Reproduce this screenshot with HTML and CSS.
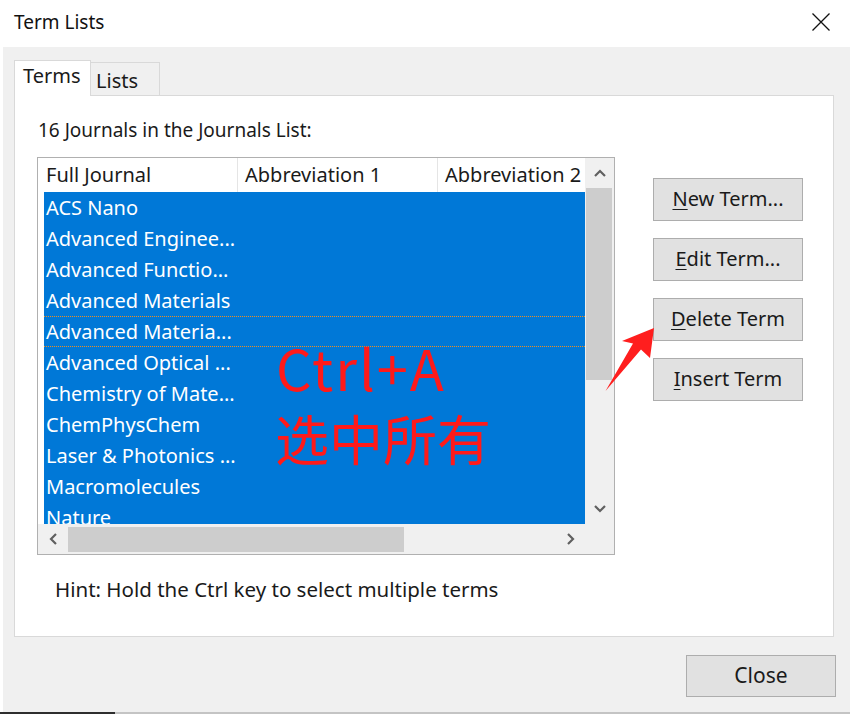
FILE: index.html
```html
<!DOCTYPE html>
<html>
<head>
<meta charset="utf-8">
<title>Term Lists</title>
<link rel="stylesheet" href="styles.css">
</head>
<body>
<div class="window">
  <div class="titlebar">
    <span class="title">Term Lists</span>
    <svg class="close-x" width="18" height="18" viewBox="0 0 18 18"><path d="M0.5 0.5 L17.5 17.5 M17.5 0.5 L0.5 17.5" stroke="#111" stroke-width="1.3" fill="none"/></svg>
  </div>
  <div class="client">
    <div class="tabs">
      <div class="tab active">Terms</div>
      <div class="tab">Lists</div>
    </div>
    <div class="panel">
      <div class="label">16 Journals in the Journals List:</div>
      <div class="main">
        <div class="listbox">
          <div class="lv">
            <div class="lv-content">
              <div class="lv-header">
                <div class="hcell c1">Full Journal</div>
                <div class="hcell c2">Abbreviation 1</div>
                <div class="hcell c3">Abbreviation 2</div>
              </div>
              <div class="rows">
                <div class="row">ACS Nano</div>
                <div class="row">Advanced Enginee...</div>
                <div class="row">Advanced Functio...</div>
                <div class="row">Advanced Materials</div>
                <div class="row focus">Advanced Materia...</div>
                <div class="row">Advanced Optical ...</div>
                <div class="row">Chemistry of Mate...</div>
                <div class="row">ChemPhysChem</div>
                <div class="row">Laser &amp; Photonics ...</div>
                <div class="row">Macromolecules</div>
                <div class="row">Nature</div>
              </div>
            </div>
            <div class="vscroll">
              <div class="sb-btn vbtn"><svg width="12" height="8" viewBox="0 0 12 8"><polyline points="1,7 6,2 11,7" fill="none" stroke="#606060" stroke-width="2.2"/></svg></div>
              <div class="vthumb"></div>
              <div class="track"></div>
              <div class="sb-btn vbtn"><svg width="12" height="8" viewBox="0 0 12 8"><polyline points="1,1 6,6 11,1" fill="none" stroke="#606060" stroke-width="2.2"/></svg></div>
            </div>
          </div>
          <div class="hscroll">
            <div class="sb-btn hbtn"><svg width="8" height="12" viewBox="0 0 8 12"><polyline points="7,1 2,6 7,11" fill="none" stroke="#606060" stroke-width="2.2"/></svg></div>
            <div class="hthumb"></div>
            <div class="track"></div>
            <div class="sb-btn hbtn"><svg width="8" height="12" viewBox="0 0 8 12"><polyline points="1,1 6,6 1,11" fill="none" stroke="#606060" stroke-width="2.2"/></svg></div>
            <div class="corner"></div>
          </div>
        </div>
        <div class="buttons">
          <div class="btn"><span class="ul">N</span>ew Term...</div>
          <div class="btn"><span class="ul">E</span>dit Term...</div>
          <div class="btn"><span class="ul">D</span>elete Term</div>
          <div class="btn"><span class="ul">I</span>nsert Term</div>
        </div>
      </div>
      <div class="hint">Hint: Hold the Ctrl key to select multiple terms</div>
    </div>
    <div class="footer">
      <div class="btn close-btn">Close</div>
    </div>
  </div>
  <div class="bottom-line"></div>

  <div class="annotation">
    <div class="ann-line1">Ctrl+A</div>
    <div class="ann-line2">选中所有</div>
  </div>
  <svg class="arrow" width="60" height="70" viewBox="600 325 60 70">
    <polygon points="654,328 622,341 633,343.5 605.5,391 641,349.5 650,358" fill="#ff1e1e"/>
  </svg>
</div>
</body>
</html>
```

FILE: styles.css
```css
html, body {
  margin: 0;
  padding: 0;
  background: #ffffff;
}

.window {
  position: relative;
  width: 850px;
  height: 714px;
  overflow: hidden;
  font-family: "Noto Sans", "Open Sans", sans-serif;
  color: #1a1a1a;
}

.titlebar {
  height: 47px;
  display: flex;
  align-items: center;
  justify-content: space-between;
  padding: 0 20px 4px 14px;
  box-sizing: border-box;
  background: #ffffff;
}

.title {
  font-size: 19px;
  color: #111;
}

.client {
  margin-left: 3px;
  height: 665px;
  background: #f0f0f0;
  padding: 13px 15px 0 11px;
  box-sizing: border-box;
}

.tabs {
  display: flex;
  height: 36px;
  margin-bottom: -1px;
  position: relative;
  z-index: 1;
}

.tab {
  box-sizing: border-box;
  border: 1px solid #d9d9d9;
  border-bottom: none;
  font-size: 20px;
  line-height: 30px;
}

.tab.active {
  width: 77px;
  height: 36px;
  background: #ffffff;
  padding-left: 8px;
}

.tab:not(.active) {
  width: 69px;
  height: 33px;
  margin-top: 2px;
  background: #f0f0f0;
  border-left: none;
  padding-left: 5px;
  line-height: 35px;
}

.panel {
  width: 820px;
  height: 542px;
  box-sizing: border-box;
  border: 1px solid #d9d9d9;
  background: #ffffff;
  padding: 22px 0 0 22px;
}

.label {
  font-size: 19px;
  line-height: 24px;
  padding-left: 1px;
}

.main {
  display: flex;
  margin-top: 15px;
}

.listbox {
  width: 578px;
  height: 398px;
  box-sizing: border-box;
  border: 1px solid #b0b0b0;
  display: flex;
  flex-direction: column;
  background: #ffffff;
}

.lv {
  display: flex;
  height: 366px;
}

.lv-content {
  width: 547px;
  overflow: hidden;
}

.lv-header {
  display: flex;
  height: 34px;
  white-space: nowrap;
}

.hcell {
  flex: none;
  box-sizing: border-box;
  font-size: 20px;
  line-height: 34px;
  overflow: hidden;
}

.c1 {
  width: 200px;
  padding-left: 8px;
  border-right: 1px solid #e5e5e5;
}

.c2 {
  width: 200px;
  padding-left: 7px;
  border-right: 1px solid #e5e5e5;
}

.c3 {
  width: 147px;
  padding-left: 7px;
}

.rows {
  margin-left: 6px;
  height: 332px;
  overflow: hidden;
  background: #0078d7;
}

.row {
  height: 31px;
  box-sizing: border-box;
  padding-left: 2px;
  font-size: 20px;
  line-height: 31px;
  color: #ffffff;
  white-space: nowrap;
}

.row.focus {
  border-top: 1px dotted #f0901e;
  border-bottom: 1px dotted #f0901e;
  line-height: 29px;
}

.vscroll {
  width: 29px;
  background: #f0f0f0;
  display: flex;
  flex-direction: column;
}

.sb-btn {
  display: flex;
  align-items: center;
  justify-content: center;
  flex: none;
}

.vbtn {
  height: 30px;
}

.vthumb {
  height: 192px;
  margin: 0 2px 0 1px;
  background: #cdcdcd;
  flex: none;
}

.track {
  flex: 1;
}

.hscroll {
  height: 30px;
  display: flex;
  background: #f0f0f0;
}

.hbtn {
  width: 29px;
}

.hthumb {
  width: 336px;
  margin: 3px 0 2px 1px;
  background: #cdcdcd;
  flex: none;
}

.corner {
  width: 29px;
  flex: none;
}

.buttons {
  margin-left: 38px;
  padding-top: 21px;
  display: flex;
  flex-direction: column;
  gap: 17px;
}

.btn {
  width: 150px;
  height: 43px;
  box-sizing: border-box;
  background: #e1e1e1;
  border: 1px solid #adadad;
  display: flex;
  align-items: center;
  justify-content: center;
  font-size: 20px;
  color: #1a1a1a;
  padding-bottom: 2px;
}

.ul {
  text-decoration: underline;
  text-underline-offset: 3px;
  text-decoration-thickness: 1px;
}

.hint {
  margin-top: 22px;
  margin-left: 18px;
  font-size: 20.5px;
  line-height: 24px;
  color: #1a1a1a;
}

.footer {
  display: flex;
  justify-content: flex-end;
  margin-top: 18px;
}

.close-btn {
  width: 150px;
  height: 42px;
  font-size: 21px;
  margin-right: -1px;
}

.bottom-line {
  height: 2px;
  background: linear-gradient(to right, #2e2e2e 115px, #c4c4c4 115px);
}

.annotation {
  position: absolute;
  left: 276px;
  top: 339px;
  color: #ff1a1a;
  font-family: "Noto Sans CJK SC", "Noto Sans", sans-serif;
  line-height: 1;
}

.ann-line1 {
  font-size: 56px;
  height: 72px;
  letter-spacing: 2px;
}

.ann-line2 {
  font-size: 54px;
  margin-left: -1px;
}

.arrow {
  position: absolute;
  left: 600px;
  top: 325px;
}
```
